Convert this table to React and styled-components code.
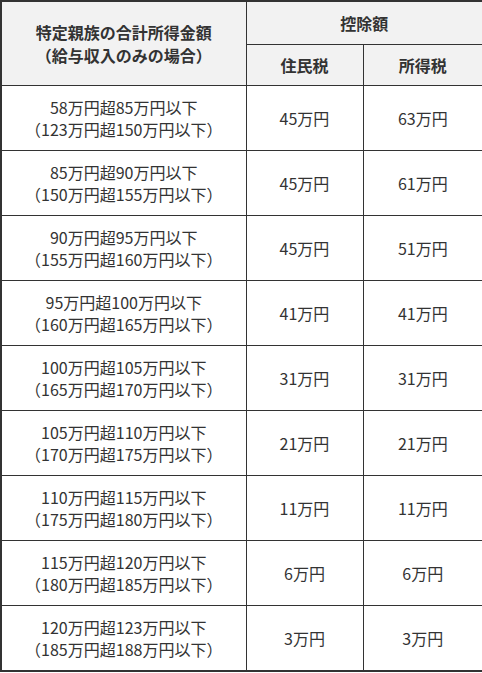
import styled, { createGlobalStyle } from "styled-components";

const GlobalStyle = createGlobalStyle`
  body {
    margin: 0;
    background: #fff;
    font-family: "Noto Sans CJK JP", "Noto Sans", sans-serif;
    color: #333;
  }
`;

const Table = styled.table`
  width: 482px;
  border-collapse: collapse;
  table-layout: fixed;
  border: 2px solid #333;
  font-size: 16px;
  line-height: 22px;
`;

const HeadCell = styled.th`
  background: #f2f2f2;
  border: 1px solid #333;
  font-weight: bold;
  text-align: center;
  padding: 0;
  height: ${(props) => props.h}px;
  line-height: 23px;
`;

const Cell = styled.td`
  border: 1px solid #333;
  text-align: center;
  padding: 0;
  height: 64px;
`;

const rows = [
  ["58万円超85万円以下", "（123万円超150万円以下）", "45万円", "63万円"],
  ["85万円超90万円以下", "（150万円超155万円以下）", "45万円", "61万円"],
  ["90万円超95万円以下", "（155万円超160万円以下）", "45万円", "51万円"],
  ["95万円超100万円以下", "（160万円超165万円以下）", "41万円", "41万円"],
  ["100万円超105万円以下", "（165万円超170万円以下）", "31万円", "31万円"],
  ["105万円超110万円以下", "（170万円超175万円以下）", "21万円", "21万円"],
  ["110万円超115万円以下", "（175万円超180万円以下）", "11万円", "11万円"],
  ["115万円超120万円以下", "（180万円超185万円以下）", "6万円", "6万円"],
  ["120万円超123万円以下", "（185万円超188万円以下）", "3万円", "3万円"],
];

const App = () => {
  return (
    <>
      <GlobalStyle />
      <Table>
        <colgroup>
          <col style={{ width: 245 }} />
          <col style={{ width: 117 }} />
          <col style={{ width: 120 }} />
        </colgroup>
        <thead>
          <tr>
            <HeadCell rowSpan={2} h={42}>
              特定親族の合計所得金額
              <br />
              （給与収入のみの場合）
            </HeadCell>
            <HeadCell colSpan={2} h={42}>
              控除額
            </HeadCell>
          </tr>
          <tr>
            <HeadCell h={40}>住民税</HeadCell>
            <HeadCell h={40}>所得税</HeadCell>
          </tr>
        </thead>
        <tbody>
          {rows.map((row) => (
            <tr key={row[0]}>
              <Cell>
                {row[0]}
                <br />
                {row[1]}
              </Cell>
              <Cell>{row[2]}</Cell>
              <Cell>{row[3]}</Cell>
            </tr>
          ))}
        </tbody>
      </Table>
    </>
  );
};

export default App;
